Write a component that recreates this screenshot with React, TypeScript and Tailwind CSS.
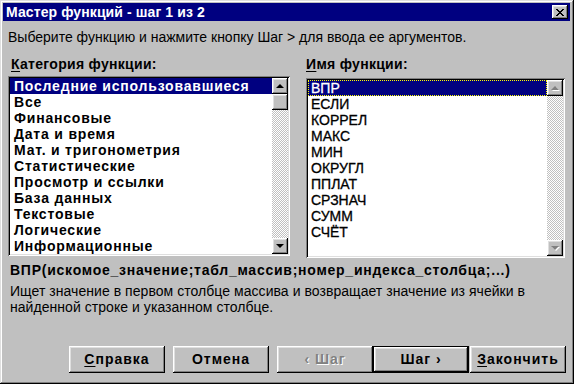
import React from "react";

const raised =
  "shadow-[inset_-1px_-1px_#000,inset_1px_1px_#fff,inset_-2px_-2px_#808080,inset_2px_2px_#dfdfdf]";
const sunken =
  "shadow-[inset_1px_1px_#808080,inset_-1px_-1px_#fff,inset_2px_2px_#000,inset_-2px_-2px_#dfdfdf]";
const checker =
  "bg-[repeating-conic-gradient(#c0c0c0_0_25%,#fff_0_50%)] bg-[length:2px_2px]";

function Arrow({ dir, disabled }: { dir: "up" | "down"; disabled?: boolean }) {
  const pts = dir === "up" ? "4,1 0,5 8,5" : "0,1 8,1 4,5";
  return (
    <div className={`w-[16px] h-[16px] bg-[#c0c0c0] ${raised} flex items-center justify-center shrink-0`}>
      <svg width="9" height="6" viewBox="0 0 9 6">
        {disabled && <polygon points={dir === "up" ? "5,2 1,6 9,6" : "1,2 9,2 5,6"} fill="#fff" />}
        <polygon points={pts} fill={disabled ? "#808080" : "#000"} />
      </svg>
    </div>
  );
}

function Btn({
  children,
  className = "",
  def,
  disabled,
}: {
  children: React.ReactNode;
  className?: string;
  def?: boolean;
  disabled?: boolean;
}) {
  const inner = (
    <div
      className={`h-full w-full ${raised} bg-[#c0c0c0] flex items-center justify-center text-[14px] font-bold tracking-[1px] ${
        disabled ? "text-[#808080] [text-shadow:1px_1px_#fff]" : "text-black"
      }`}
    >
      {children}
    </div>
  );
  return (
    <div className={`h-[27px] w-[96px] ${def ? "border border-black" : ""} ${className}`}>{inner}</div>
  );
}

export default function App() {
  const cats = [
    "Последние использовавшиеся",
    "Все",
    "Финансовые",
    "Дата и время",
    "Мат. и тригонометрия",
    "Статистические",
    "Просмотр и ссылки",
    "База данных",
    "Текстовые",
    "Логические",
    "Информационные",
  ];
  const funcs = ["ВПР", "ЕСЛИ", "КОРРЕЛ", "МАКС", "МИН", "ОКРУГЛ", "ППЛАТ", "СРЗНАЧ", "СУММ", "СЧЁТ"];

  return (
    <div
      className="w-[574px] h-[384px] bg-[#c0c0c0] p-[3px] flex flex-col font-['Liberation_Sans',Arial,sans-serif] text-black shadow-[inset_-1px_-1px_#000,inset_1px_1px_#dfdfdf,inset_-2px_-2px_#808080,inset_2px_2px_#fff] overflow-hidden"
    >
      {/* Title bar */}
      <div className="h-[18px] bg-[#000080] flex items-center justify-between pl-[3px] pr-[2px] mr-[1px]">
        <span className="text-white font-bold text-[14px] leading-[16px] tracking-[0.1px]">
          Мастер функций - шаг 1 из 2
        </span>
        <div className={`w-[16px] h-[14px] bg-[#c0c0c0] ${raised} flex items-center justify-center`}>
          <svg width="8" height="7" viewBox="0 0 8 7" shapeRendering="crispEdges">
            <path
              d="M0 0h2v1h-2zM6 0h2v1h-2zM1 1h2v1h-2zM5 1h2v1h-2zM2 2h4v1h-4zM3 3h2v1h-2zM2 4h4v1h-4zM1 5h2v1h-2zM5 5h2v1h-2zM0 6h2v1h-2zM6 6h2v1h-2z"
              fill="#000"
            />
          </svg>
        </div>
      </div>

      {/* Instruction */}
      <div className="mt-[8px] pl-[5px] text-[14px] leading-[16px]">
        Выберите функцию и нажмите кнопку Шаг &gt; для ввода ее аргументов.
      </div>

      {/* Lists */}
      <div className="flex mt-[11px] pl-[5px]">
        <div className="flex flex-col w-[282px]">
          <div className="pl-[3px] text-[14px] leading-[16px] font-bold tracking-[0.3px]">
            <span className="underline underline-offset-2">К</span>атегория функции:
          </div>
          <div className={`mt-[4px] h-[180px] bg-white ${sunken} p-[2px] flex`}>
            <div className="flex-1 flex flex-col overflow-hidden">
              {cats.map((c, i) => (
                <div
                  key={c}
                  className={`h-[16px] shrink-0 pl-[4px] text-[14px] leading-[16px] font-bold tracking-[0.8px] whitespace-nowrap ${
                    i === 0 ? "bg-[#000080] text-white" : ""
                  }`}
                >
                  {c}
                </div>
              ))}
            </div>
            <div className={`w-[16px] flex flex-col ${checker}`}>
              <Arrow dir="up" />
              <div className={`w-[16px] h-[16px] bg-[#c0c0c0] ${raised}`} />
              <div className="flex-1" />
              <Arrow dir="down" />
            </div>
          </div>
        </div>

        <div className="flex flex-col w-[259px] ml-[16px]">
          <div className="text-[14px] leading-[16px] font-bold tracking-[0.3px]">
            <span className="underline underline-offset-2">И</span>мя функции:
          </div>
          <div className={`mt-[6px] h-[180px] bg-white ${sunken} p-[2px] flex`}>
            <div className="flex-1 flex flex-col overflow-hidden">
              {funcs.map((f, i) => (
                <div
                  key={f}
                  className={`h-[16px] shrink-0 pl-[3px] text-[14px] leading-[16px] whitespace-nowrap [-webkit-text-stroke:0.3px_currentColor] ${
                    i === 0
                      ? "bg-[#000080] text-white outline outline-1 outline-dotted outline-[#ffff00] -outline-offset-1"
                      : ""
                  }`}
                >
                  {f}
                </div>
              ))}
            </div>
            <div className={`w-[16px] flex flex-col ${checker}`}>
              <Arrow dir="up" disabled />
              <div className="flex-1" />
              <Arrow dir="down" disabled />
            </div>
          </div>
        </div>
      </div>

      {/* Signature */}
      <div className="mt-[4px] pl-[7px] text-[14px] leading-[16px] font-bold tracking-[0.75px]">
        ВПР(искомое_значение;табл_массив;номер_индекса_столбца;...)
      </div>
      <div className="mt-[5px] pl-[7px] text-[14px] leading-[16px] tracking-[0.05px] pr-[10px]">
        Ищет значение в первом столбце массива и возвращает значение из ячейки в
        <br />
        найденной строке и указанном столбце.
      </div>

      {/* Buttons */}
      <div className="mt-auto mb-[8px] flex pl-[66px]">
        <Btn>
          <span className="underline underline-offset-2">С</span>правка
        </Btn>
        <Btn className="ml-[8px]">Отмена</Btn>
        <Btn className="ml-[8px]" disabled>
          &lsaquo; Шаг
        </Btn>
        <Btn def>Шаг &rsaquo;</Btn>
        <Btn className="ml-[1px]">
          <span className="underline underline-offset-2">З</span>акончить
        </Btn>
      </div>
    </div>
  );
}
